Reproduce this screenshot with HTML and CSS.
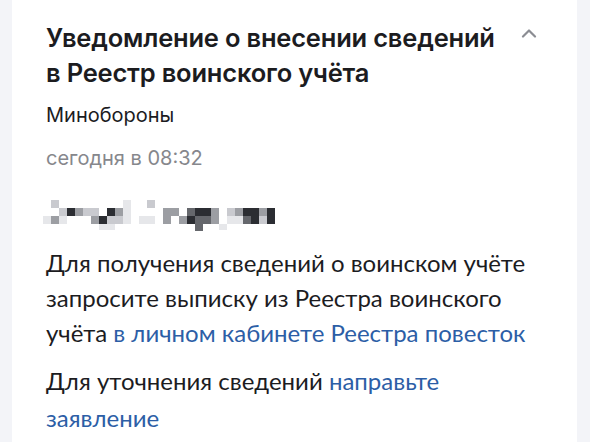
FILE: index.html
```html
<!DOCTYPE html>
<html lang="ru">
<head>
<meta charset="utf-8">
<title>Уведомление</title>
<link rel="stylesheet" href="styles.css">
</head>
<body>
<div class="card">
  <div class="head">
    <h1 class="title">Уведомление о внесении сведений<br>в Реестр воинского учёта</h1>
    <svg class="chev" width="16" height="10" viewBox="0 0 16 10"><path d="M2 8.5 L8 2.5 L14 8.5" fill="none" stroke="#8b8d93" stroke-width="2.2" stroke-linecap="round" stroke-linejoin="round"/></svg>
  </div>
  <div class="org">Минобороны</div>
  <div class="date">сегодня в 08:32</div>
  <svg class="mosaic" width="240" height="32" viewBox="0 0 240 32">
    <g fill="#e6e7ea">
      <rect x="80" y="0" width="8" height="8"/>
      <rect x="0" y="16" width="8" height="8"/>
      <rect x="16" y="16" width="8" height="8"/>
      <rect x="80" y="8" width="8" height="8"/>
      <rect x="80" y="16" width="8" height="8"/>
      <rect x="96" y="16" width="8" height="8"/>
      <rect x="104" y="16" width="8" height="8"/>
      <rect x="184" y="16" width="8" height="8"/>
      <rect x="192" y="16" width="8" height="8"/>
      <rect x="56" y="24" width="16" height="6"/>
      <rect x="176" y="24" width="8" height="6"/>
    </g>
    <g fill="#c9cacf">
      <rect x="8" y="0" width="8" height="8"/>
      <rect x="104" y="0" width="8" height="8"/>
      <rect x="16" y="8" width="8" height="8"/>
      <rect x="40" y="8" width="8" height="8"/>
      <rect x="48" y="8" width="8" height="8"/>
      <rect x="184" y="8" width="8" height="8"/>
      <rect x="64" y="16" width="8" height="8"/>
      <rect x="72" y="16" width="8" height="8"/>
      <rect x="216" y="16" width="8" height="8"/>
    </g>
    <g fill="#9c9ea3">
      <rect x="32" y="8" width="8" height="8"/>
      <rect x="72" y="8" width="8" height="8"/>
      <rect x="120" y="8" width="8" height="8"/>
      <rect x="128" y="8" width="8" height="8"/>
      <rect x="168" y="8" width="8" height="8"/>
      <rect x="192" y="8" width="8" height="8"/>
      <rect x="216" y="8" width="8" height="8"/>
      <rect x="8" y="16" width="8" height="8"/>
      <rect x="48" y="16" width="8" height="8"/>
      <rect x="120" y="16" width="8" height="8"/>
      <rect x="136" y="16" width="8" height="8"/>
      <rect x="168" y="16" width="8" height="8"/>
    </g>
    <g fill="#65676c">
      <rect x="144" y="8" width="8" height="8"/>
      <rect x="152" y="16" width="8" height="8"/>
      <rect x="160" y="16" width="8" height="8"/>
      <rect x="200" y="16" width="8" height="8"/>
      <rect x="152" y="24" width="8" height="7"/>
    </g>
    <g fill="#2b2d32">
      <rect x="24" y="8" width="8" height="8"/>
      <rect x="64" y="8" width="8" height="8"/>
      <rect x="152" y="8" width="8" height="8"/>
      <rect x="160" y="8" width="8" height="8"/>
      <rect x="200" y="8" width="16" height="8"/>
      <rect x="224" y="8" width="8" height="8"/>
      <rect x="56" y="16" width="8" height="8"/>
      <rect x="144" y="16" width="8" height="8"/>
      <rect x="208" y="16" width="8" height="8"/>
      <rect x="224" y="16" width="8" height="8"/>
    </g>
  </svg>
  <p class="text">Для получения сведений о воинском учёте запросите выписку из Реестра воинского учёта <a class="link" href="#">в личном кабинете Реестра повесток</a></p>
  <p class="text second">Для уточнения сведений <a class="link" href="#">направьте заявление</a></p>
</div>
</body>
</html>
```
FILE: styles.css
```css
html, body {
  margin: 0;
  padding: 0;
  background: #f3f4f8;
}
.card {
  margin: 0 13px 0 12px;
  min-height: 442px;
  box-sizing: border-box;
  background: #ffffff;
  padding: 20px 34px 0 34px;
  font-family: Inter, "Noto Sans", sans-serif;
  color: #1c1c1f;
}
.head {
  display: flex;
  justify-content: space-between;
  align-items: flex-start;
}
.title {
  margin: 0;
  font-size: 25.5px;
  line-height: 35px;
  font-weight: 600;
  letter-spacing: -0.2px;
}
.chev {
  margin-top: 8px;
  margin-right: 6px;
  flex-shrink: 0;
}
.org {
  margin-top: 11px;
  font-size: 20px;
  line-height: 28px;
}
.date {
  margin-top: 15px;
  font-size: 20px;
  line-height: 28px;
  color: #86878c;
}
.mosaic {
  display: block;
  margin-top: 28px;
  margin-left: -3px;
}
.text {
  margin: 13px 6px 0 0;
  font-family: Lato, "Noto Sans", sans-serif;
  font-size: 24px;
  line-height: 35px;
}
.second {
  margin-top: 12px;
  line-height: 37px;
}
.link {
  color: #2c5ea6;
  text-decoration: none;
}
```
